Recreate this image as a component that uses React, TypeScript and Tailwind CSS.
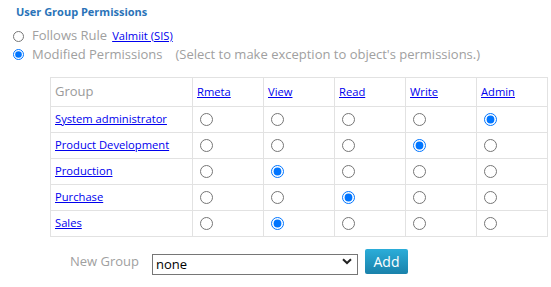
import React from 'react'

const cols = ['Rmeta', 'View', 'Read', 'Write', 'Admin']

const rows: { name: string, checked: number }[] = [
  { name: 'System administrator', checked: 4 },
  { name: 'Product Development', checked: 3 },
  { name: 'Production', checked: 1 },
  { name: 'Purchase', checked: 2 },
  { name: 'Sales', checked: 1 },
]

export default function App() {
  return (
    <div className="w-[551px] h-[287px] bg-white font-['Open_Sans',sans-serif] overflow-hidden">
      <div className="pl-4 pt-[3px] text-[11px] font-bold text-[#2a73b8] leading-[18px]">User Group Permissions</div>

      <div className="pl-[13px] pt-[6px] text-[#a0a0a0] text-[13px]">
        <label className="flex items-center h-[18px]">
          <input type="radio" name="mode" className="m-0 w-[11px] h-[11px]" />
          <span className="ml-[8px]">Follows Rule</span>
          <a href="#" className="ml-[5px] text-[11.2px] text-[#0000ee] underline">Valmiit (SIS)</a>
        </label>
        <label className="flex items-center h-[19px]">
          <input type="radio" name="mode" defaultChecked className="m-0 w-[11px] h-[11px]" />
          <span className="ml-[8px]">Modified Permissions</span>
          <span className="ml-[13px]">(Select to make exception to object's permissions.)</span>
        </label>
      </div>

      <table className="ml-[50px] mt-[13px] border-collapse text-[11.2px]">
        <thead>
          <tr className="h-[29px]">
            <th className="w-[142px] border border-[#e2e2e2] px-1 text-left font-normal text-[13px] text-[#9a9a9a]">Group</th>
            {cols.map(c => (
              <th key={c} className="w-[71px] border border-[#e2e2e2] px-1 text-left font-normal align-middle">
                <a href="#" className="text-[#0000ee] underline">{c}</a>
              </th>
            ))}
          </tr>
        </thead>
        <tbody>
          {rows.map((r, i) => (
            <tr key={r.name} className="h-[26px]">
              <td className="border border-[#e2e2e2] px-1">
                <a href="#" className="text-[#0000ee] underline">{r.name}</a>
              </td>
              {cols.map((c, j) => (
                <td key={c} className="border border-[#e2e2e2] pl-[7px]">
                  <input type="radio" name={`g${i}`} defaultChecked={r.checked === j} className="block m-0 w-[13px] h-[13px]" />
                </td>
              ))}
            </tr>
          ))}
        </tbody>
      </table>

      <div className="flex items-center ml-[70px] mt-[12px]">
        <span className="text-[13px] text-[#a0a0a0] w-[82px]">New Group</span>
        <div className="relative w-[206px] h-[21px]">
          <select className="appearance-none w-full h-full border border-[#767676] bg-white pl-[3px] text-[13px] text-black outline-none">
            <option>none</option>
          </select>
          <svg className="absolute right-[6px] top-[7px] pointer-events-none" width="10" height="7" viewBox="0 0 10 7">
            <path d="M1 1.2 L5 5 L9 1.2" fill="none" stroke="#222" strokeWidth="2" />
          </svg>
        </div>
        <button className="ml-[7px] w-[43px] h-[25px] rounded-[2px] bg-gradient-to-b from-[#2badd9] to-[#1a82ab] text-white text-[14px] leading-none">Add</button>
      </div>
    </div>
  )
}
